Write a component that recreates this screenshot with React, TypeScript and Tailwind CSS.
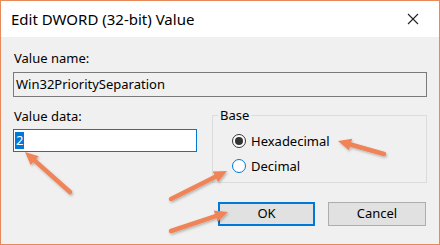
import React from "react";

const font = { fontFamily: '"Noto Sans", "Open Sans", sans-serif' };

function Radio({ checked, label }: { checked?: boolean; label: string }) {
  return (
    <label className="flex items-center gap-[5px] h-[22px]">
      <span
        className={
          checked
            ? "w-[14px] h-[14px] rounded-full border border-[#333] bg-white flex items-center justify-center"
            : "w-[14px] h-[14px] rounded-full border border-[#0078d7] bg-white"
        }
      >
        {checked && <span className="w-[8px] h-[8px] rounded-full bg-[#333]" />}
      </span>
      <span className="text-[13px] leading-[16px] text-black">{label}</span>
    </label>
  );
}

function Arrow({ x1, y1, x2, y2 }: { x1: number; y1: number; x2: number; y2: number }) {
  const a = Math.atan2(y2 - y1, x2 - x1);
  const len = 13;
  const w = 6;
  const bx = x2 - len * Math.cos(a);
  const by = y2 - len * Math.sin(a);
  const p1 = `${bx + w * Math.sin(a)},${by - w * Math.cos(a)}`;
  const p2 = `${bx - w * Math.sin(a)},${by + w * Math.cos(a)}`;
  return (
    <g>
      <line x1={x1} y1={y1} x2={bx} y2={by} stroke="#ef8458" strokeWidth={4.5} strokeLinecap="round" />
      <polygon points={`${x2},${y2} ${p1} ${p2}`} fill="#ef8458" />
    </g>
  );
}

export default function App() {
  return (
    <div
      className="relative w-[440px] h-[245px] border border-[#e8895a] bg-[#f0f0f0] flex flex-col overflow-hidden"
      style={font}
    >
      {/* Title bar */}
      <div className="h-[36px] bg-white flex items-center justify-between pl-[10px] pr-[20px]">
        <span className="text-[15px] text-black">Edit DWORD (32-bit) Value</span>
        <svg width="12" height="12" viewBox="0 0 12 12">
          <path d="M1 1 L11 11 M11 1 L1 11" stroke="#222" strokeWidth="1.1" />
        </svg>
      </div>

      <div className="flex-1 flex flex-col px-[12px] pt-[13px]">
        <div className="text-[13px] leading-[16px] text-black pl-[1px]">Value name:</div>
        <div className="mt-[6px] h-[25px] border border-[#7a7a7a] bg-[#f0f0f0] flex items-center px-[2px] text-[13px] text-black">
          Win32PrioritySeparation
        </div>

        <div className="mt-[10px] flex gap-[15px]">
          <div className="w-[184px] flex flex-col">
            <div className="text-[13px] leading-[16px] text-black pl-[1px] pt-[1px]">Value data:</div>
            <div className="mt-[5px] h-[23px] border border-[#0078d7] bg-white flex items-center px-[1px]">
              <span className="bg-[#0078d7] text-white text-[13px] leading-[17px] px-[1px]">2</span>
            </div>
          </div>

          <fieldset className="flex-1 h-[76px] border border-[#dcdcdc]">
            <legend className="text-[13px] leading-[16px] text-black ml-[5px] px-[2px]">Base</legend>
            <div className="pl-[19px] pt-[7px] flex flex-col gap-[3px]">
              <Radio checked label="Hexadecimal" />
              <Radio label="Decimal" />
            </div>
          </fieldset>
        </div>

        <div className="mt-[19px] flex justify-end gap-[13px] pr-[1px]">
          <button className="w-[97px] h-[24px] bg-[#e1e1e1] border-2 border-[#0078d7] text-[13px] text-black">
            OK
          </button>
          <button className="w-[98px] h-[24px] bg-[#e1e1e1] border border-[#adadad] text-[13px] text-black">
            Cancel
          </button>
        </div>
      </div>

      {/* Annotation arrows */}
      <svg className="absolute inset-0 pointer-events-none" width="440" height="245">
        <defs>
          <filter id="sh" x="-20%" y="-20%" width="140%" height="140%">
            <feDropShadow dx="1" dy="1.5" stdDeviation="1.2" floodColor="#000" floodOpacity="0.25" />
          </filter>
        </defs>
        <g filter="url(#sh)">
          <Arrow x1={69} y1={191} x2={24} y2={151} />
          <Arrow x1={170} y1={198} x2={226} y2={170} />
          <Arrow x1={170} y1={230} x2={227} y2={211} />
          <Arrow x1={383} y1={153} x2={337} y2={140} />
        </g>
      </svg>
    </div>
  );
}
